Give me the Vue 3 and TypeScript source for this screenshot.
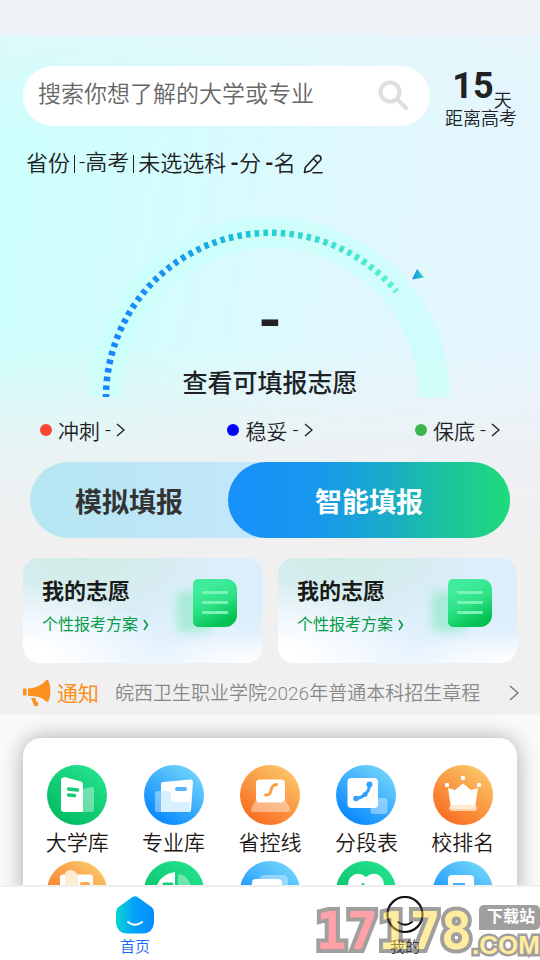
<script setup lang="ts">
import { ref } from 'vue'

type Tone = 'green' | 'blue' | 'orange'

interface Stat { label: string; value: string; color: string }
interface Entry { id: string; label: string; tone: Tone }

const keyword = ref('')
const daysLeft = 15

const stats: Stat[] = [
  { label: '冲刺', value: '-', color: '#f94436' },
  { label: '稳妥', value: '-', color: '#0000ff' },
  { label: '保底', value: '-', color: '#39b54a' },
]

const plans = [
  { id: 1, title: '我的志愿', note: '个性报考方案' },
  { id: 2, title: '我的志愿', note: '个性报考方案' },
]

const entries: Entry[] = [
  { id: 'college', label: '大学库', tone: 'green' },
  { id: 'major', label: '专业库', tone: 'blue' },
  { id: 'line', label: '省控线', tone: 'orange' },
  { id: 'segment', label: '分段表', tone: 'blue' },
  { id: 'rank', label: '校排名', tone: 'orange' },
  { id: 'book', label: '', tone: 'orange' },
  { id: 'chart', label: '', tone: 'green' },
  { id: 'cards', label: '', tone: 'blue' },
  { id: 'heart', label: '', tone: 'green' },
  { id: 'doc', label: '', tone: 'blue' },
]
</script>

<template>
  <div class="page">
    <div class="statusbar"></div>
    <main class="content">
      <section class="hero">
        <div class="top">
          <form class="search" @submit.prevent>
            <input v-model="keyword" type="text" aria-label="搜索" placeholder="搜索你想了解的大学或专业" />
            <button type="submit" aria-label="搜索">
              <svg viewBox="0 0 32 32" width="32" height="32" fill="none" stroke="#dedede" stroke-width="4">
                <circle cx="12" cy="12" r="9.5" />
                <path d="M18.5 18.5 29.5 29.5" />
              </svg>
            </button>
          </form>
          <div class="countdown">
            <div class="days"><strong>{{ daysLeft }}</strong><span>天</span></div>
            <div>距离高考</div>
          </div>
        </div>

        <div class="profile">
          <span>省份</span><i class="bar"></i><span class="exam">-高考</span><i class="bar"></i>
          <span class="subject">未选选科</span>
          <span><b>-</b>分</span>
          <span><b>-</b>名</span>
          <button type="button" aria-label="编辑">
            <svg viewBox="0 0 20 20" width="20" height="20" fill="none" stroke="#202124" stroke-width="1.6" stroke-linejoin="round" stroke-linecap="round">
              <path d="M1.500 18.500 2.300 13.500 12.500 2.300Q14.800 .4 17 2.200 19 4.100 17.200 6.500L7.300 17Z M11 5.500 14.500 8.800 M10 18.800H19" />
            </svg>
          </button>
        </div>

        <div class="gauge">
          <svg viewBox="0 0 360 180" width="360" height="180">
            <defs>
              <linearGradient id="tick" gradientUnits="userSpaceOnUse" x1="15" y1="0" x2="307" y2="0">
                <stop offset="0" stop-color="#1783ff" />
                <stop offset=".25" stop-color="#1a97ef" />
                <stop offset=".5" stop-color="#18c8d3" />
                <stop offset="1" stop-color="#5cf3cd" />
              </linearGradient>
              <linearGradient id="pointer"><stop offset="0" stop-color="#1c88ed" /><stop offset="1" stop-color="#28dcc3" /></linearGradient>
            </defs>
            <path d="M15.500 180A164.500 164.500 0 0 1 344.500 180" fill="none" stroke="#cafffa" stroke-opacity=".75" stroke-width="31" />
            <path d="M16 180A164.500 164.500 0 0 1 306.500 74.500" fill="none" stroke="url(#tick)" stroke-width="6.500" stroke-dasharray="4.500 4.200" stroke-dashoffset="1.500" />
            <path d="M327 52 322 62.500 334 60.500Z" fill="url(#pointer)" />
          </svg>
          <div class="reading">
            <strong class="value">-</strong>
            <a href="#plans">查看可填报志愿</a>
          </div>
        </div>

        <div class="stats">
          <a v-for="s in stats" :key="s.label" href="#plans">
            <i class="dot" :style="{ background: s.color }"></i>
            <span>{{ s.label }}</span><span>{{ s.value }}</span>
            <svg viewBox="0 0 9 14" width="9" height="14" fill="none" stroke="#202124" stroke-width="1.400"><path d="M1 1 8 7 1 13" /></svg>
          </a>
        </div>

        <div class="actions">
          <button type="button" class="mock">模拟填报</button>
          <button type="button" class="smart">智能填报</button>
        </div>

        <div id="plans" class="plans">
          <a v-for="p in plans" :key="p.id" class="plan" href="#plans">
            <div>
              <h2>{{ p.title }}</h2>
              <p>{{ p.note }}
                <svg viewBox="0 0 6 12" width="6" height="12" fill="none" stroke="#069c47" stroke-width="1.600"><path d="M1 1 4.500 6 1 11" /></svg>
              </p>
            </div>
            <span class="sheet"><i></i><i></i><i></i></span>
          </a>
        </div>

        <a class="notice" href="#notice">
          <svg viewBox="0 0 28 28" width="28" height="28" fill="#fa9020">
            <path d="M0 9.500H3.500V16.500H0Z M5 9.500C13 9 18 6.500 22 2.500 23 .5 25 .3 25.500 2 28 8 28 15 26 21 25 23.500 23 23 22 21.500 18 18 13 17 5 17Z M8 19H12.500L13.500 23H15V27H11.500Z" />
          </svg>
          <span class="tag">通知</span>
          <span class="headline">皖西卫生职业学院2026年普通本科招生章程</span>
          <svg viewBox="0 0 10 16" width="10" height="16" fill="none" stroke="#777" stroke-width="1.500"><path d="M1 1 9 8 1 15" /></svg>
        </a>
      </section>

      <section class="shelf">
        <div class="entries">
          <a v-for="e in entries" :key="e.id" class="entry" href="#entry" :aria-label="e.label || e.id">
            <span class="icon" :class="e.tone">
              <svg v-if="e.id === 'college'" viewBox="0 0 60 60">
                <path class="w" d="M14 15Q14 13 17.500 12L34 16.500Q36 17 36 19V47H17Q14 47 14 44Z" />
                <path class="t" d="M31.500 27Q31.500 25 34 24.500L44 22Q47 21.500 47 24V44Q47 47 44 47H34Q31.500 47 31.500 44Z" />
                <path d="M21.500 24 30.500 25M21.500 30 27.500 30.500" stroke="#14cd76" stroke-width="3.500" stroke-linecap="round" />
              </svg>
              <svg v-else-if="e.id === 'major'" viewBox="0 0 60 60">
                <path class="t" d="M11 29Q11 26 14 26H25V47H13Q11 47 11 45Z" />
                <path class="w" d="M17 19Q17 17 19 17L47 14.500Q49 14.500 49 17L47 45Q47 47 45 47H17Z" />
                <path d="M17 26H23Q27 26 27 31V34Q27 37 30 37H43Q46 37 46 40V47H17Z" fill="#d7efff" />
                <path d="M33 24H41" stroke="#4fb6fb" stroke-width="4" stroke-linecap="round" />
              </svg>
              <svg v-else-if="e.id === 'line'" viewBox="0 0 60 60">
                <rect class="w" x="16" y="14.500" width="29" height="23" rx="4" />
                <path d="M15 36H46L50 43Q50 47 47 47H13Q11 47 11 44Z" fill="#fff" fill-opacity=".4" />
                <path d="M25.500 30C34 31 28 20 36.500 19.500" fill="none" stroke="#fb9c44" stroke-width="3" stroke-linecap="round" />
              </svg>
              <svg v-else-if="e.id === 'segment'" viewBox="0 0 60 60">
                <rect class="w" x="11.500" y="13" width="30.500" height="30" rx="4" />
                <rect class="t" x="34.500" y="33" width="17" height="16" rx="3" />
                <path d="M20 33.500Q26 33 29 29 33.500 26 33.500 19.500" fill="none" stroke="#34a0fb" stroke-width="3" />
                <g fill="#34a0fb"><circle cx="20" cy="33.500" r="2.800" /><circle cx="29" cy="29.500" r="2.500" /><circle cx="33.500" cy="19.500" r="3" /></g>
              </svg>
              <svg v-else-if="e.id === 'rank'" viewBox="0 0 60 60">
                <path class="w" d="M15 23 22 25 30 18.500 38 25 45 23 42 43Q42 44 40 44H20Q18 44 18 43Z" />
                <g class="w"><rect x="12" y="18" width="4" height="4" rx="1" /><rect x="28" y="11" width="4" height="4" rx="1" /><rect x="44" y="18" width="4" height="4" rx="1" /></g>
                <rect x="16" y="40" width="28" height="6" rx="3" fill="#ffe4c6" fill-opacity=".8" />
              </svg>
              <svg v-else-if="e.id === 'book'" viewBox="0 0 60 60">
                <rect class="w" x="13" y="13.500" width="33" height="32" rx="3" />
                <path d="M18 13Q19 9 24 9 31 10 31 17V45H18Z" fill="#fdebd4" />
                <path d="M35 23H41" stroke="#fba652" stroke-width="4" stroke-linecap="round" />
              </svg>
              <svg v-else-if="e.id === 'chart'" viewBox="0 0 60 60">
                <path class="w" d="M31 11V46H12V27Q16 13 31 11Z" />
                <path class="t" d="M34 13Q46 14 48 30V44H34Z" />
                <path d="M20 23H28" stroke="#16cf79" stroke-width="3" stroke-linecap="round" />
              </svg>
              <svg v-else-if="e.id === 'cards'" viewBox="0 0 60 60">
                <rect class="t" x="19" y="14" width="29" height="22" rx="5" />
                <rect class="w" x="12" y="18" width="30" height="25" rx="4" />
              </svg>
              <svg v-else-if="e.id === 'heart'" viewBox="0 0 60 60">
                <path class="w" d="M30 16Q39 9 46 17 51 25 43 34L30 46 17 34Q9 25 14 17 21 9 30 16Z" />
                <circle cx="27" cy="23.500" r="1.500" fill="#16cf79" />
              </svg>
              <svg v-else viewBox="0 0 60 60">
                <rect class="w" x="15" y="14" width="26" height="32" rx="4" />
                <path d="M20 23.500H32" stroke="#47aefb" stroke-width="3" />
              </svg>
            </span>
            <span class="name">{{ e.label }}</span>
          </a>
        </div>
      </section>
    </main>

    <nav class="tabs">
      <a class="active" href="#home">
        <svg viewBox="0 0 38 38" width="38" height="38">
          <defs><linearGradient id="home"><stop offset="0" stop-color="#08d4d0" /><stop offset=".5" stop-color="#04a1fb" /><stop offset="1" stop-color="#068cff" /></linearGradient></defs>
          <path d="M16.500 1Q19 -.5 21.500 1L35.500 11Q38 13 38 16V27Q37 37 27 37.500H11Q1 37 0 27V16Q0 13 2.500 11Z" fill="url(#home)" />
          <path d="M12 26Q19 31.500 26 26" fill="none" stroke="#fff" stroke-width="2" stroke-linecap="round" />
        </svg>
        <span>首页</span>
      </a>
      <a href="#mine">
        <svg viewBox="0 0 38 38" width="38" height="38" fill="none" stroke="#111">
          <circle cx="19" cy="18.500" r="17.500" stroke-width="2.200" />
          <path d="M12 26Q19 31.500 26 26" stroke-width="2" stroke-linecap="round" />
        </svg>
        <span>我的</span>
      </a>
      <div class="stamp">
        <div class="digits"><span class="red">17</span><span class="yellow">178</span></div>
        <div class="side">
          <span class="bubble">下载站</span>
          <span class="com">.COM</span>
        </div>
      </div>
    </nav>
  </div>
</template>

<style>
body { margin: 0; }
</style>

<style scoped>
* { box-sizing: border-box; }
.page {
  display: flex;
  flex-direction: column;
  height: 100vh;
  overflow: hidden;
  background: #fafafa;
  color: #202124;
  font-family: Roboto, "Noto Sans CJK SC", sans-serif;
  font-weight: 350;
  font-size: 21px;
}
a { color: inherit; text-decoration: none; }
button { padding: 0; border: 0; background: none; color: inherit; font: inherit; }
svg { display: block; flex: none; }
.statusbar { flex: none; height: 36px; background: #edf3f6; }
.content { flex: 1; min-height: 0; overflow: hidden; }
.hero {
  padding: 30px 23px 0;
  background:
    linear-gradient(to bottom, rgba(231, 245, 250, .6) 0, rgba(231, 245, 250, 0) 100px, rgba(240, 240, 241, 0) 310px, rgba(240, 240, 241, .75) 410px, #f0f0f1 500px),
    linear-gradient(100deg, #ccfffc 0%, #d3fdfc 25%, #e0f8fd 60%, #e7f4ff 100%);
}
.top { display: flex; align-items: flex-start; gap: 15px; }
.search {
  display: flex;
  flex: 1;
  align-items: center;
  height: 60px;
  padding: 0 20px 0 15px;
  border-radius: 30px;
  background: #fff;
}
.search input {
  flex: 1;
  min-width: 0;
  padding: 0 0 4px;
  border: 0;
  outline: 0;
  background: none;
  color: #333;
  font: inherit;
  font-size: 23px;
}
.search input::placeholder { color: #666; opacity: 1; }
.countdown { height: 60px; font-size: 18px; line-height: 18px; white-space: nowrap; }
.days { display: flex; justify-content: center; align-items: flex-end; height: 44px; padding-left: 2px; }
.days strong { align-self: flex-start; font-size: 36px; line-height: 40px; font-weight: 700; }
.profile { display: flex; align-items: center; height: 30px; margin-top: 23px; padding-left: 3px; gap: 4px; font-size: 22px; line-height: 30px; white-space: nowrap; }
.profile b { font-weight: 700; }
.bar { width: 1px; height: 18px; background: #202124; }
.profile .exam { padding-bottom: 3px; }
.profile button { margin-left: 3px; }
.gauge { display: grid; justify-items: center; margin-top: 38px; }
.gauge > * { grid-area: 1 / 1; }
.reading { display: flex; flex-direction: column; align-items: center; justify-content: flex-end; font-size: 25px; line-height: 26px; font-weight: 500; }
.value { font-size: 60px; line-height: 60px; font-weight: 700; margin-bottom: 20px; }
.stats { display: flex; justify-content: space-between; margin-top: 15px; padding: 0 17px; }
.stats a { display: flex; align-items: center; gap: 5px; height: 36px; }
.dot { width: 12px; height: 12px; margin-right: 1px; border-radius: 50%; }
.actions { display: flex; height: 76px; margin: 14px 7px 0; border-radius: 38px; background: linear-gradient(to right, #b5e6f1, #c2e6fa 40%); font-size: 27px; }
.actions button { font-weight: 700; border-radius: 38px; }
.mock { flex: 33; color: #333; }
.actions .smart { flex: 47; color: #fff; background: linear-gradient(to right, #1890fa, #1797ee 30%, #19aacb 55%, #1cc49d 78%, #1edb79); }
.plans { display: grid; grid-template-columns: 1fr 1fr; gap: 16px; margin-top: 20px; }
.plan {
  display: flex;
  justify-content: space-between;
  height: 105px;
  padding: 20px 25px 0 19px;
  border-radius: 16px;
  background:
    radial-gradient(ellipse 45% 30% at 95% 100%, #fff, rgba(255, 255, 255, 0)),
    radial-gradient(ellipse 60% 80% at 0 100%, #fff 20%, rgba(255, 255, 255, 0)),
    radial-gradient(ellipse 60% 70% at 25% 0, #d0ebe3, rgba(208, 235, 227, 0)),
    linear-gradient(to bottom, #dceefb 50%, #e8f4ff);
}
.plan h2 { margin: 0; color: #181b18; font-size: 22px; line-height: 28px; font-weight: 700; }
.plan p { display: flex; align-items: center; gap: 5px; margin: 7px 0 0; color: #069c47; font-size: 16px; line-height: 24px; font-weight: 400; white-space: nowrap; }
.sheet {
  display: flex;
  flex-direction: column;
  gap: 7px;
  width: 44px;
  height: 48px;
  margin-top: 1px;
  padding: 12px 9px;
  border-radius: 5px 10px 12px 5px;
  background: linear-gradient(155deg, #40ec9b 20%, #2de286 50%, #04c052 85%);
  box-shadow: -20px 9px 9px -4px rgba(73, 228, 145, .35);
}
.sheet i { height: 3px; border-radius: 1px; background: #7af3b6; }
.notice { display: flex; align-items: center; height: 52px; padding-top: 8px; margin-right: -2px; }
.tag, .headline { padding-bottom: 3px; white-space: nowrap; }
.tag { margin-left: 6px; color: #fa9020; font-weight: 400; }
.headline { flex: 1; margin-left: 16px; color: #888; font-size: 19px; }
.shelf { padding: 23px 23px 0; }
.entries {
  display: grid;
  grid-template-columns: repeat(5, 1fr);
  padding: 27px 6px 20px;
  border-radius: 18px;
  background: #fff;
  box-shadow: 0 0 22px rgba(0, 0, 0, .32);
}
.entry { display: flex; flex-direction: column; align-items: center; color: #231815; }
.icon { width: 60px; height: 60px; border-radius: 50%; }
.green { background: linear-gradient(215deg, #22df8c 15%, #05bc62 85%); }
.blue { background: linear-gradient(215deg, #6bd0fb 15%, #0a8aff 85%); }
.orange { background: linear-gradient(215deg, #fbc164 15%, #f97023 85%); }
.w { fill: #fff; }
.t { fill: #fff; fill-opacity: .38; }
.name { height: 36px; line-height: 36px; white-space: nowrap; }
.tabs { position: relative; display: grid; grid-template-columns: 1fr 1fr; flex: none; height: 75px; border-top: 2px solid #efefef; background: #fff; }
.tabs a { display: flex; flex-direction: column; align-items: center; padding-top: 9px; font-size: 15px; line-height: 26px; color: #333; }
.tabs .active { color: #1767ff; }
.stamp { position: absolute; right: 0; bottom: 0; display: flex; align-items: flex-end; opacity: .5; font-weight: 700; line-height: 1; }
.digits { font-family: "DejaVu Sans Mono", monospace; font-size: 52px; line-height: 58px; -webkit-text-stroke: 8px #444140; paint-order: stroke fill; }
.red { color: #ff4551; }
.yellow { color: #ffda3f; }
.side { display: flex; flex-direction: column; align-items: flex-end; }
.bubble { padding: 4px 5px 5px 8px; border-radius: 5px 5px 5px 0; background: #444140; color: #fff; font-size: 16px; line-height: 16px; }
.com { font-family: "Liberation Sans", sans-serif; font-size: 26px; line-height: 30px; color: #ffda3f; -webkit-text-stroke: 5px #444140; paint-order: stroke fill; }
</style>
